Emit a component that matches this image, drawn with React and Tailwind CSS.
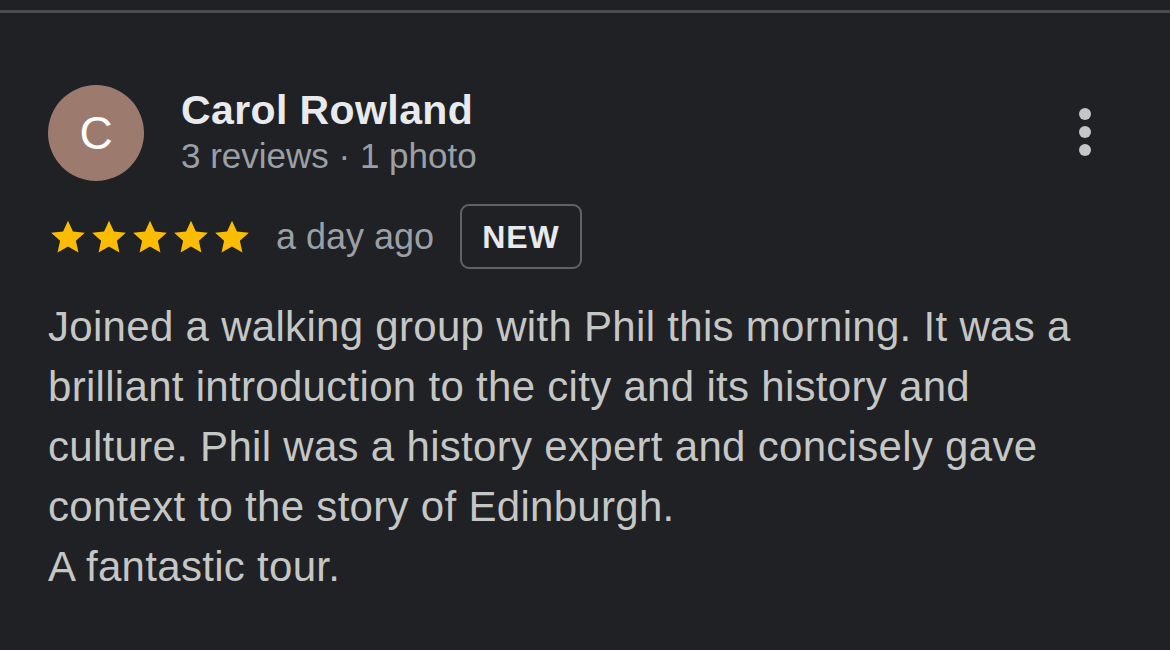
import React from "react";

function Stars() {
  return (
    <div className="flex items-center gap-[1px]">
      {[0, 1, 2, 3, 4].map((i) => (
        <svg key={i} viewBox="0 0 24 24" className="w-[40px] h-[40px]">
          <path
            d="M12 2.2l2.95 6.55 7.15.72-5.37 4.8 1.54 7.03L12 17.7l-6.27 3.6 1.54-7.03-5.37-4.8 7.15-.72z"
            fill="#fbbc04"
          />
        </svg>
      ))}
    </div>
  );
}

export default function App() {
  return (
    <div className="w-[1170px] h-[650px] bg-[#202124] overflow-hidden font-['Liberation_Sans',Arial,sans-serif]">
      <div className="h-[10px]" />
      <div className="h-[3px] bg-[#4a4b4f]" />

      <div className="px-[48px] pt-[72px]">
        {/* Header */}
        <div className="flex items-start">
          <div className="w-[96px] h-[96px] rounded-full bg-[#9c7b6e] flex items-center justify-center text-white text-[46px] leading-none">
            C
          </div>
          <div className="ml-[37px] pt-[2px] flex-1">
            <div className="text-[#e8eaed] text-[41px] font-bold leading-[46px] tracking-[0.4px]">
              Carol Rowland
            </div>
            <div className="text-[#9aa0a6] text-[35px] leading-[46px]">
              3 reviews · 1 photo
            </div>
          </div>
          <div className="flex flex-col items-center gap-[6px] mt-[23px] mr-[31px]">
            <span className="w-[12px] h-[12px] rounded-full bg-[#c4c7c5]" />
            <span className="w-[12px] h-[12px] rounded-full bg-[#c4c7c5]" />
            <span className="w-[12px] h-[12px] rounded-full bg-[#c4c7c5]" />
          </div>
        </div>

        {/* Rating row */}
        <div className="flex items-center mt-[23px]">
          <Stars />
          <span className="ml-[24px] text-[#9aa0a6] text-[36px]">a day ago</span>
          <span className="ml-[26px] h-[65px] px-[20px] flex items-center border-2 border-[#5f6368] rounded-[9px] text-[#e8eaed] text-[32px] font-bold tracking-[1px]">
            NEW
          </span>
        </div>

        {/* Body */}
        <p className="mt-[28px] w-[1040px] text-[#c4c7c5] text-[42px] leading-[60px] tracking-[0.3px]">
          Joined a walking group with Phil this morning. It was a brilliant introduction to the city and its history and culture. Phil was a history expert and concisely gave context to the story of Edinburgh.
          <br />
          A fantastic tour.
        </p>
      </div>
    </div>
  );
}
